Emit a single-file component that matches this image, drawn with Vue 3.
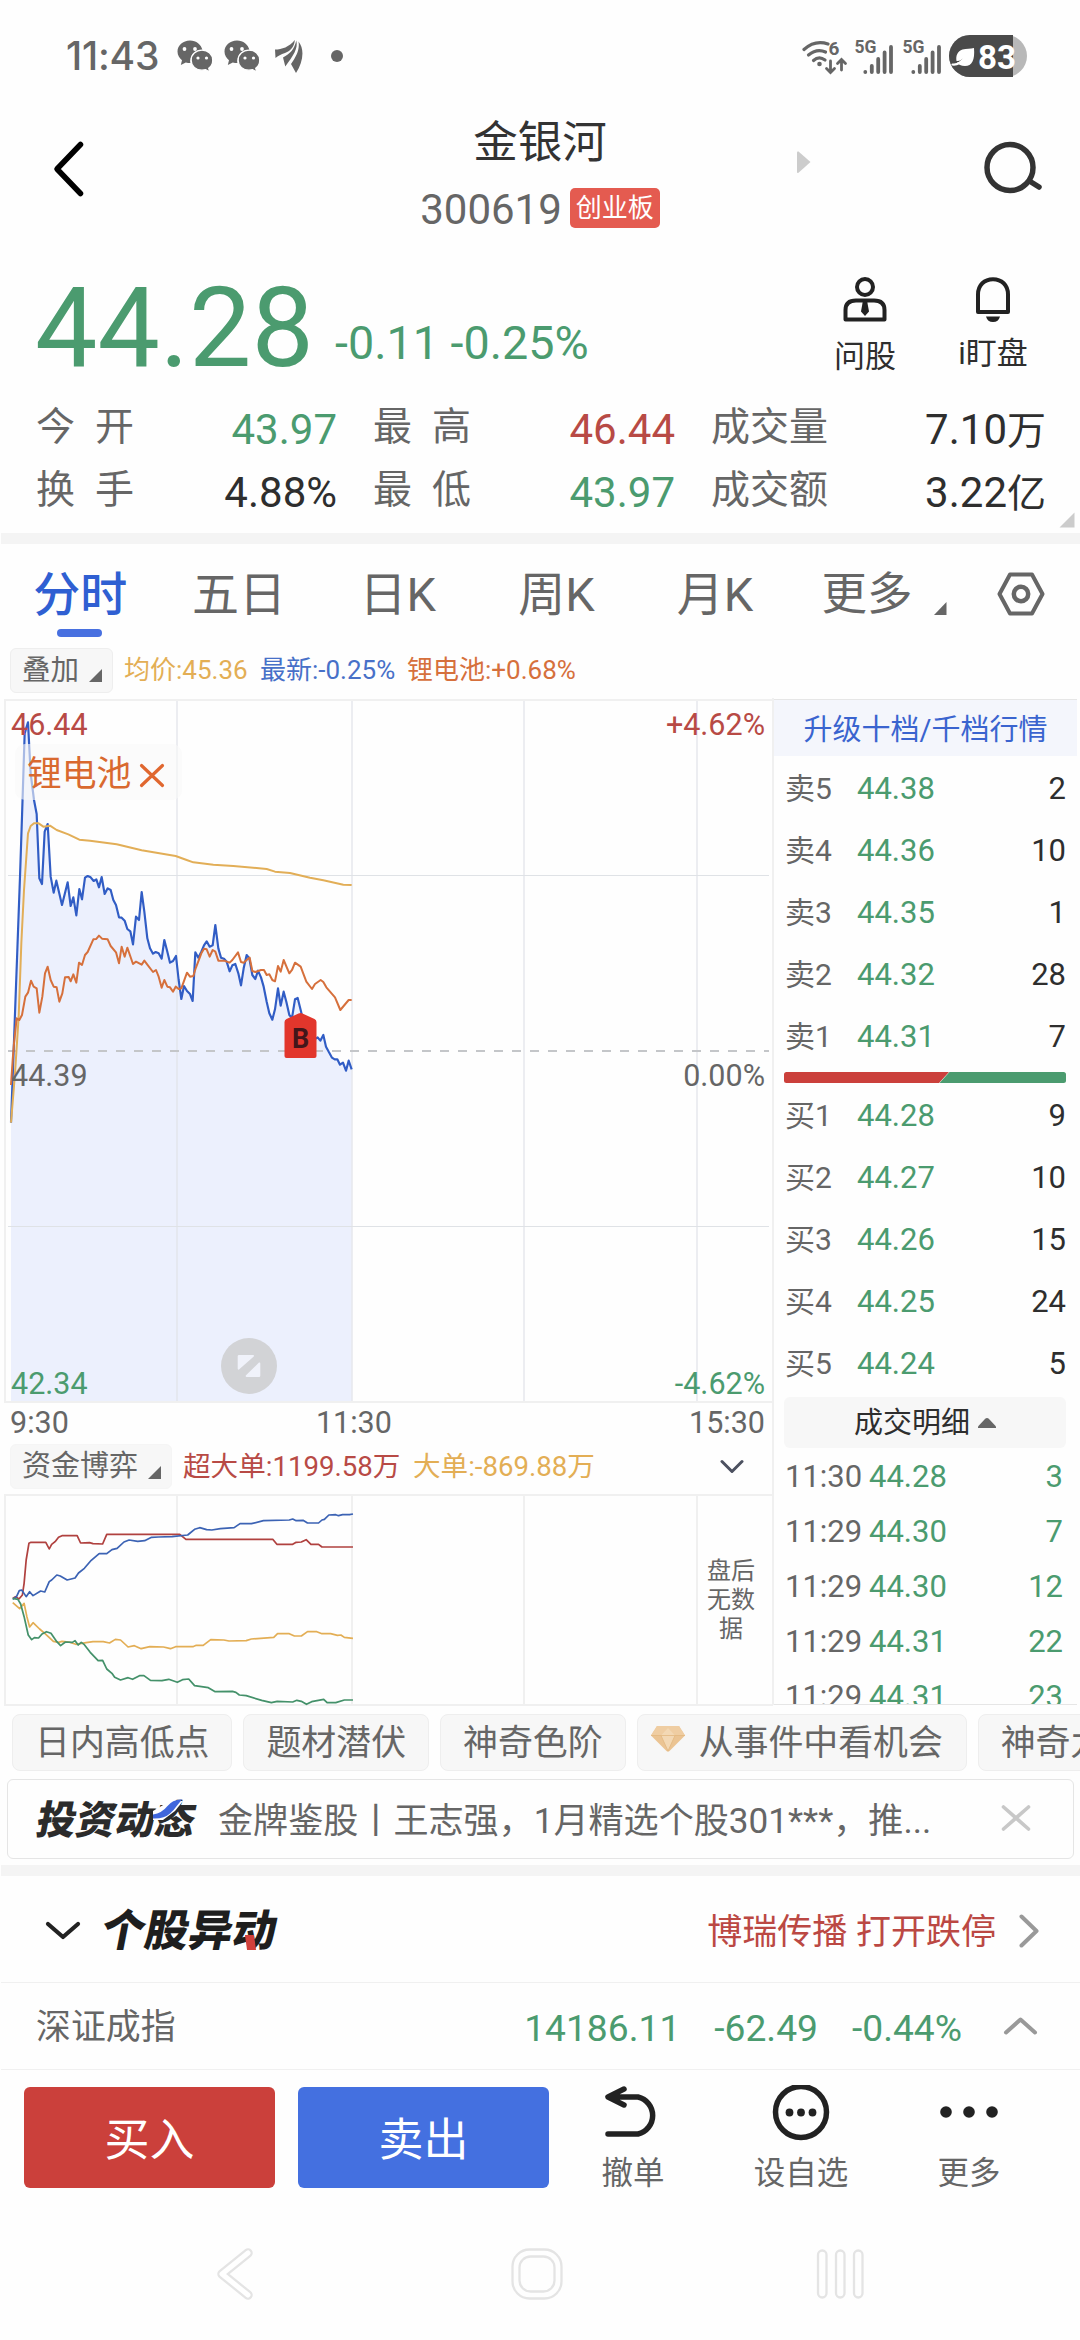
<script setup>
const stats = [
  { label: ['今', '开'], value: '43.97', tone: 'green' },
  { label: ['最', '高'], value: '46.44', tone: 'red' },
  { label: ['成', '交', '量'], value: '7.10', unit: '万', tone: 'dark' },
  { label: ['换', '手'], value: '4.88%', tone: 'dark' },
  { label: ['最', '低'], value: '43.97', tone: 'green' },
  { label: ['成', '交', '额'], value: '3.22', unit: '亿', tone: 'dark' },
]
const tabs = ['分时', '五日', '日K', '周K', '月K']
const asks = [
  ['卖5', '44.38', 2],
  ['卖4', '44.36', 10],
  ['卖3', '44.35', 1],
  ['卖2', '44.32', 28],
  ['卖1', '44.31', 7],
]
const bids = [
  ['买1', '44.28', 9],
  ['买2', '44.27', 10],
  ['买3', '44.26', 15],
  ['买4', '44.25', 24],
  ['买5', '44.24', 5],
]
const ticks = [
  ['11:30', '44.28', 3],
  ['11:29', '44.30', 7],
  ['11:29', '44.30', 12],
  ['11:29', '44.31', 22],
  ['11:29', '44.31', 23],
]
const gridX = [177, 352, 524, 697]

// Series are kept in thirds of a pixel.
const price =
  '33,1298 52,780 60,560 66,380 74,130 84,97 92,250 102,330 110,372 118,565 126,582 134,425 143,402 152,560 161,608 169,572 186,645 203,577 212,648 220,622 229,676 238,597 246,628 255,563 263,558 272,562 281,573 289,568 297,592 305,561 314,612 323,595 332,600 340,630 348,645 357,682 365,683 374,692 382,717 391,724 399,763 408,680 417,690 425,606 433,665 442,745 450,775 459,791 467,786 476,790 485,806 493,750 502,785 510,818 519,813 528,798 536,870 544,927 552,888 561,903 570,912 578,933 586,787 595,803 604,785 612,766 620,754 629,770 638,766 646,705 655,775 663,803 672,806 680,815 689,844 697,826 706,822 715,850 723,886 731,835 740,795 748,805 757,855 766,867 774,842 783,862 791,890 800,935 808,970 817,989 825,958 834,895 842,947 851,905 859,935 868,975 876,984 885,928 893,924 902,960 908,985 925,1030 940,1050 953,1042 961,1052 970,1035 978,1070 987,1087 996,1103 1004,1108 1012,1108 1020,1124 1029,1118 1038,1142 1046,1112 1055,1138'
const sector =
  '33,1185 38,1110 42,1060 50,985 58,990 66,975 76,920 84,908 93,872 101,890 110,895 118,968 127,920 135,850 143,830 152,870 161,890 170,892 178,935 187,910 195,862 206,861 212,874 220,853 229,878 237,818 246,825 255,795 263,786 280,748 289,747 297,737 306,746 323,748 332,768 348,787 357,820 365,770 374,800 382,773 399,822 408,815 425,824 433,812 442,824 459,846 468,840 476,860 485,893 493,870 502,890 510,892 519,905 527,890 536,897 544,895 561,848 570,860 580,858 587,835 604,790 612,776 620,778 629,800 638,780 646,785 655,812 672,812 689,818 697,810 714,787 723,816 731,818 740,810 749,803 757,843 766,846 783,840 792,840 800,855 808,853 817,870 825,874 834,828 842,845 851,810 868,850 876,840 885,818 902,830 919,875 936,897 945,882 962,870 970,876 979,892 1005,922 1021,960 1046,930 1055,930'
const average =
  '33,1298 45,1150 56,980 64,760 72,600 84,430 92,408 102,400 116,400 130,410 150,407 170,420 205,433 238,449 270,452 350,463 425,481 527,498 560,510 580,517 640,524 700,528 800,537 825,545 870,549 930,563 970,571 1030,584 1055,585'

const flows = [
  { color: '#e3ae55', points: '37,368 57,386 70,370 78,410 86,441 96,428 115,447 130,460 155,484 170,487 180,484 200,486 220,493 250,488 270,485 300,485 318,489 335,478 350,480 372,501 390,497 410,506 435,500 475,501 495,506 510,500 560,500 570,496 590,496 612,479 650,480 665,483 715,482 730,477 795,472 806,461 840,461 855,468 875,468 893,455 920,455 935,461 960,461 980,466 990,465 1000,472 1025,475' },
  { color: '#b0413f', points: '37,355 45,350 55,357 65,345 70,310 76,240 84,190 90,187 133,187 143,207 150,193 160,185 170,172 180,167 224,167 234,189 260,188 270,191 298,192 310,163 522,163 540,178 792,178 804,193 850,193 860,187 875,186 889,179 903,193 925,193 935,201 1025,201' },
  { color: '#3c63b4', points: '37,358 48,350 56,332 63,330 76,350 86,335 96,347 118,333 130,336 143,305 150,300 165,285 175,288 195,300 218,294 228,279 245,265 265,241 288,221 310,221 325,209 340,205 360,186 375,180 400,184 420,182 440,172 460,171 500,170 545,165 565,148 580,143 600,149 615,150 640,146 680,143 697,131 730,131 765,122 840,120 850,117 860,122 880,121 893,129 925,129 935,120 942,118 955,105 975,104 983,107 995,104 1015,104 1025,102' },
  { color: '#44916a', points: '37,355 52,358 60,372 70,410 82,465 92,479 100,473 112,474 122,462 135,455 148,460 165,485 176,497 190,486 210,487 218,482 227,495 236,487 245,494 262,517 285,542 298,541 310,567 325,580 333,592 350,600 372,593 385,598 405,587 418,587 437,601 470,602 490,598 515,607 530,599 548,597 565,617 605,623 625,635 675,634 685,637 695,645 715,647 760,661 788,668 805,664 850,666 862,661 875,664 890,673 905,665 940,658 950,668 975,668 1000,660 1025,660' },
]
</script>

<template>
  <div class="screen">
    <div class="status">
      <span class="clock">11:43</span>
      <svg v-for="n in 2" :key="n" class="wechat" width="36" height="32" viewBox="0 0 36 32">
        <path fill="#666" d="M13 0.5C5.800.5.5 5.500.5 11.500c0 3.700 2 6.700 4.500 8.700L3.800 25l5-2.500c1.500.4 3 .6 4.600.6A11 11 0 0 1 25.500 10.200C24.300 4.600 19.200.5 13 .5z" />
        <path fill="#666" stroke="#fff" stroke-width="1.200" d="M25 10.200c-6.100 0-10.800 4.200-10.800 10s4.700 10 10.800 10c1.300 0 2.500-.2 3.700-.5l4 2.300-1-3.700c2.400-1.800 4-4.800 4-8.100 0-5.800-4.600-10-10.700-10z" />
        <g fill="#fff"><circle cx="7.500" cy="9" r="1.900" /><circle cx="18" cy="9" r="1.900" /><circle cx="21" cy="18" r="1.600" /><circle cx="29.500" cy="18" r="1.600" /></g>
      </svg>
      <svg class="wing" width="28" height="33" viewBox="0 0 28 33" fill="#666">
        <path d="M0 9.500C7 9.500 14 7 19.800 0 19.500 6 16 11 10 13 6 14.500 3 15.500 0.500 18z" />
        <path d="M21.300.5c2 8-3 15-11 26L8 17.500C15 14 19.500 9 21.300.5z" />
        <path d="M23.500 1.500c6.500 8 4.500 21-2.500 31.500l-5-9C21 17 25 10 23.500 1.500z" />
      </svg>
      <i class="dot"></i>
      <svg class="signals" width="226" height="44" viewBox="802 34 226 44">
        <g fill="none" stroke="#666" stroke-width="3.200" stroke-linecap="round">
          <path d="M804 49.500Q815 39.500 828 44" />
          <path d="M808.500 55Q817 48 825.500 52" />
          <path d="M813.500 60.500Q819 55.500 825 60" />
          <path d="M830.500 61v11M826.500 68.500l4 4 4-4M841.500 70V60M837.500 63.500l4-4 4 4" stroke-width="2.800" />
        </g>
        <circle cx="819.500" cy="64" r="2.300" fill="#666" />
        <text x="828.500" y="54.500" class="sig" font-size="19">6</text>
        <g v-for="dx in [0, 48]" :key="dx" :transform="`translate(${dx} 0)`">
          <text x="854.500" y="53" class="sig" font-size="17.500" textLength="22" lengthAdjust="spacingAndGlyphs">5G</text>
          <g stroke="#666" stroke-width="3.800" stroke-linecap="round">
            <path d="M865.300 72v.1M871.800 66v6M878.200 59v13M884.600 52.500v19.500M891 47v25" />
          </g>
        </g>
        <rect x="949" y="35" width="78" height="42" rx="21" fill="#b8b8b8" />
        <path d="M970 35h43v42h-43a21 21 0 0 1 0-42z" fill="#4a4a4a" />
        <path d="M974 48c1 12-2 18-9 18-4 0-6.500-1.500-8-3.500 3 0 7-3 9.500-6.500-3.500 3-7 5.500-10 5-1-5 1-10 6-11.500 4-1.200 8-.5 11.500-1.500z" fill="#fff" />
        <path d="M952.500 64.500c5 1 9.500-3 13.500-8" stroke="#fff" stroke-width="2.200" fill="none" stroke-linecap="round" />
        <text x="978" y="69.200" class="batt" textLength="38" lengthAdjust="spacingAndGlyphs">83</text>
      </svg>
    </div>

    <header class="header">
      <svg class="back" width="34" height="58" viewBox="0 0 34 58"><path d="M28.500 4.500 5 29l23.500 24.500" fill="none" stroke="#000" stroke-width="5.500" stroke-linecap="round" stroke-linejoin="round" /></svg>
      <div class="heading">
        <h1>金银河</h1>
        <div class="code"><span>300619</span><b>创业板</b></div>
      </div>
      <div class="header-right">
        <svg width="16" height="24" viewBox="0 0 16 24"><path d="M1 2.500Q1 1 2.500 1.500L14.500 12 2.500 22.800Q1 23.500 1 22z" fill="#ccc" /></svg>
        <svg class="search" width="62" height="60" viewBox="0 0 62 60" fill="none" stroke="#333" stroke-width="5.500" stroke-linecap="round"><circle cx="29" cy="29.500" r="23" /><path d="M50 44l8 5" /></svg>
      </div>
    </header>

    <section class="quote">
      <div class="price-row">
        <span class="price">44.28</span>
        <span class="change">-0.11 -0.25%</span>
        <div class="quick ask">
          <svg width="44" height="46" viewBox="0 0 44 46" fill="none" stroke="#222" stroke-width="4">
            <circle cx="22" cy="11" r="8" />
            <path d="M2.500 43.500V34Q2.500 24.500 13 24.500h18q10.500 0 10.500 9.500v9.500z" stroke-linejoin="round" />
            <path d="M19.700 26h4.600l1.700 9.500-4 4.500-4-4.500z" fill="#222" stroke="none" />
          </svg>
          <span>问股</span>
        </div>
        <div class="quick watch">
          <svg width="36" height="46" viewBox="0 0 36 46">
            <path d="M3 36V18.500C3 9 9.500 3.200 18 3.200S33 9 33 18.500V36z" fill="none" stroke="#222" stroke-width="4" stroke-linejoin="round" />
            <path d="M11 40.500h14q-1.500 5.500-7 5.500t-7-5.500z" fill="#222" />
          </svg>
          <span>i盯盘</span>
        </div>
      </div>
      <div class="stats">
        <div v-for="(s, i) in stats" :key="i" class="stat">
          <span class="stat-label"><i v-for="c in s.label" :key="c">{{ c }}</i></span>
          <span :class="s.tone">{{ s.value }}<small v-if="s.unit">{{ s.unit }}</small></span>
        </div>
      </div>
      <svg class="corner" width="16" height="16" viewBox="0 0 16 16"><path d="M15.500 0.500v15h-15z" fill="#ccc" /></svg>
    </section>

    <div class="band"></div>

    <nav class="tabs">
      <span v-for="(t, i) in tabs" :key="t" class="tab" :class="{ active: i === 0 }">{{ t }}</span>
      <span class="more">更多</span>
      <svg class="tri" width="13" height="13" viewBox="0 0 13 13"><path d="M12.500 0v13H0z" fill="#666" /></svg>
      <svg class="hex" width="48" height="44" viewBox="0 0 48 44" fill="none" stroke="#666" stroke-width="4"><path d="M13 2.500h22L45.500 22 35 41.500H13L2.500 22z" stroke-linejoin="round" /><circle cx="24" cy="22" r="7.200" stroke-width="4.500" /></svg>
    </nav>

    <div class="legend">
      <span class="pill"><span>叠加</span><svg width="13" height="13" viewBox="0 0 12 12"><path d="M12 0v12H0z" fill="#666" /></svg></span>
      <span class="avg">均价:45.36</span>
      <span class="last">最新:-0.25%</span>
      <span class="sector">锂电池:+0.68%</span>
    </div>

    <main class="market">
      <div class="charts">
        <svg class="chart" width="775" height="706" viewBox="0 698 775 706">
          <g transform="translate(0 690) scale(.33333)">
            <polygon :points="`33,2136 ${price} 1055,2136`" fill="#ecf0fd" />
          </g>
          <g stroke="#e2e4ea" stroke-opacity=".65" stroke-width="2">
            <path v-for="x in gridX" :key="x" :d="`M${x} 700V1402`" />
          </g>
          <path d="M8 875.500H769M8 1226.500H769" stroke="#dfe2e6" stroke-width="1" />
          <path d="M773 700H5V1402H773" fill="none" stroke="#f0f0f0" stroke-width="2" />
          <path d="M8 1051H769" stroke="#c4c6c9" stroke-width="1.800" stroke-dasharray="9 9" />
          <g class="axis">
            <text x="765" y="1086" fill="#666" text-anchor="end">0.00%</text>
            <text x="765" y="735" fill="#b84a45" text-anchor="end">+4.62%</text>
            <text x="11" y="1394" fill="#4b9b6f">42.34</text>
            <text x="765" y="1394" fill="#4b9b6f" text-anchor="end">-4.62%</text>
          </g>
          <g transform="translate(0 690) scale(.33333)" fill="none" stroke-width="6" stroke-linejoin="round">
            <polyline :points="price" stroke="#315dc5" stroke-width="6.500" />
            <polyline :points="average" stroke="#e2ae57" />
            <polyline :points="sector" stroke="#d6703c" />
          </g>
          <text x="11" y="1086" class="axis" fill="#666">44.39</text>
          <text x="11" y="735" class="axis" fill="#b84a45">46.44</text>
          <rect x="15" y="744" width="167" height="56" rx="10" fill="#f8f8f8" fill-opacity=".6" />
          <text x="27" y="785.500" class="tag-text">锂电池</text>
          <path d="M141.500 765.500l21 20M162.500 765.500l-21 20" stroke="#e0672f" stroke-width="3.200" stroke-linecap="round" />
          <path d="M284.500 1022q0-2 2-3l12-5.500q2-.8 4 0l12 5.500q2 1 2 3v34q0 2-2 2h-28q-2 0-2-2z" fill="#e2362c" />
          <text x="300.500" y="1048" class="mark">B</text>
          <circle cx="249" cy="1366" r="28" fill="#d2d3d6" />
          <path d="M239 1355h14.500q1 .8 0 1.800L239 1369.500q-1.300.5-1.300-1v-12.200q0-1.300 1.300-1.300zM259 1377h-12.500q-1.500-.8-.5-1.800L259 1362.500q1.300-.5 1.300 1v12.200q0 1.300-1.300 1.300z" fill="#f0f2fa" />
        </svg>
        <div class="times"><span>9:30</span><span>11:30</span><span>15:30</span></div>
        <div class="flow-head">
          <span class="pill wide"><span>资金博弈</span><svg width="13" height="13" viewBox="0 0 12 12"><path d="M12 0v12H0z" fill="#666" /></svg></span>
          <span class="red">超大单:1199.58万</span>
          <span class="gold">大单:-869.88万</span>
          <svg class="fold" width="24" height="15" viewBox="0 0 24 15"><path d="M2 2.500l10 10 10-10" fill="none" stroke="#4c5160" stroke-width="3" stroke-linecap="round" stroke-linejoin="round" /></svg>
        </div>
        <div class="flow-chart">
          <svg class="chart" width="775" height="214" viewBox="0 1493 775 214">
            <g stroke="#f0f0f0" stroke-width="2">
              <path v-for="x in gridX" :key="x" :d="`M${x} 1495V1705`" />
              <path d="M773 1495H5V1705H773" fill="none" />
            </g>
            <g transform="translate(0 1480) scale(.34436 .33333)" fill="none" stroke-width="5" stroke-linejoin="round">
              <polyline v-for="f in flows" :key="f.color" :points="f.points" :stroke="f.color" />
            </g>
          </svg>
          <p class="nodata">盘后无数据</p>
        </div>
      </div>

      <aside class="book">
        <div class="upgrade">升级十档/千档行情</div>
        <div v-for="r in asks" :key="r[0]" class="level"><span>{{ r[0] }}</span><b>{{ r[1] }}</b><em>{{ r[2] }}</em></div>
        <svg class="ratio" width="282" height="11" viewBox="0 0 282 11"><path d="M2.500 0H165l-10 11H2.500Q0 11 0 8.500v-6Q0 0 2.500 0z" fill="#cb403b" /><path d="M165.500 0h114q2.500 0 2.500 2.500v6q0 2.500-2.500 2.500h-124z" fill="#4b9b6f" /></svg>
        <div v-for="r in bids" :key="r[0]" class="level"><span>{{ r[0] }}</span><b>{{ r[1] }}</b><em>{{ r[2] }}</em></div>
        <div class="detail"><span>成交明细</span><svg width="18" height="10" viewBox="0 0 18 10"><path d="M9 0q1 0 1.800.8L18 8.500V10H0V8.500L7.200.8Q8 0 9 0z" fill="#666" /></svg></div>
        <div v-for="(r, i) in ticks" :key="i" class="tick"><span>{{ r[0] }}</span><b>{{ r[1] }}</b><em>{{ r[2] }}</em></div>
      </aside>
    </main>

    <div class="chips">
      <span>日内高低点</span>
      <span>题材潜伏</span>
      <span>神奇色阶</span>
      <span class="gem">
        <svg width="34" height="26" viewBox="0 0 34 26"><path d="M6 0h22l6 9.500L18.500 25q-1.500 1.300-3 0L0 9.500z" fill="#ebc493" /><path d="M6 0h22l6 9.500H0z" fill="#efcda2" /><path d="M10 9.500 17 2l7 7.500L17 25z" fill="#f3d8b4" /><path d="M0 9.500h34M10 9.500 17 25l7-15.500" fill="none" stroke="#e2b780" stroke-width=".8" /></svg>
        从事件中看机会
      </span>
      <span>神奇九转</span>
    </div>

    <div class="banner">
      <span class="logo"><span class="logo-text">投资动态</span>
        <svg width="32" height="22" viewBox="0 0 32 22"><path d="M0 21V12L17 2h13L22 12 10 21z" fill="#fefefe" /><path d="M0 15.500Q9 14 14 7.500 20 0 29 .5L24.500 6q-3.500 5-7.500 8.500Q11 20 0 19.500z" fill="#3f66dc" /></svg>
      </span>
      <span class="news">金牌鉴股丨王志强，1月精选个股301***，推...</span>
      <svg class="close" width="30" height="28" viewBox="0 0 30 28"><path d="M2.500 3l25 22M27.500 3l-25 22" stroke="#c8c8c8" stroke-width="3.600" stroke-linecap="round" /></svg>
    </div>

    <div class="band"></div>

    <div class="moves">
      <svg width="36" height="20" viewBox="0 0 36 20"><path d="M3 3l15 13L33 3" fill="none" stroke="#222" stroke-width="4.200" stroke-linecap="round" stroke-linejoin="round" /></svg>
      <span class="logo big"><span class="logo-text">个股异动</span><i></i></span>
      <span class="alert">博瑞传播 打开跌停</span>
      <svg width="20" height="34" viewBox="0 0 20 34"><path d="M2.500 2.500 17.500 17l-15 14.500" fill="none" stroke="#999" stroke-width="4" stroke-linecap="round" stroke-linejoin="round" /></svg>
    </div>

    <div class="index">
      <span class="index-name">深证成指</span>
      <span class="i1">14186.11</span><span class="i2">-62.49</span><span class="i3">-0.44%</span>
      <svg width="35" height="20" viewBox="0 0 35 20"><path d="M3 16.500l14.500-13L32 16.500" fill="none" stroke="#999" stroke-width="4" stroke-linecap="round" stroke-linejoin="round" /></svg>
    </div>

    <footer class="actions">
      <button class="buy">买入</button>
      <button class="sell">卖出</button>
      <div class="act undo">
        <svg width="58" height="56" viewBox="0 0 58 56" fill="none" stroke="#222" stroke-width="5.500" stroke-linecap="round" stroke-linejoin="round"><path d="M20 4 4 12l16 8M5 12h29a19 19 0 0 1 0 37H4" /></svg>
        <span>撤单</span>
      </div>
      <div class="act fav">
        <svg width="58" height="56" viewBox="0 0 58 56"><circle cx="29" cy="27" r="25.500" fill="none" stroke="#222" stroke-width="5.500" /><g fill="#222"><circle cx="17.500" cy="27.500" r="3.900" /><circle cx="29" cy="27.500" r="3.900" /><circle cx="40.500" cy="27.500" r="3.900" /></g></svg>
        <span>设自选</span>
      </div>
      <div class="act etc">
        <svg width="58" height="56" viewBox="0 0 58 56" fill="#222"><circle cx="6" cy="27" r="5.800" /><circle cx="29" cy="27" r="5.800" /><circle cx="52" cy="27" r="5.800" /></svg>
        <span>更多</span>
      </div>
    </footer>

    <div class="sysnav">
      <svg width="36" height="54" viewBox="0 0 36 54"><path d="M31 6 5 27l26 21" fill="none" stroke="#e4e4e4" stroke-width="9.500" stroke-linecap="round" stroke-linejoin="round" /><path d="M31 6 5 27l26 21" fill="none" stroke="#fff" stroke-width="5" stroke-linecap="round" stroke-linejoin="round" /></svg>
      <svg width="52" height="54" viewBox="0 0 52 54" fill="none" stroke="#e4e4e4" stroke-width="2.300"><rect x="1.500" y="2.500" width="49" height="49" rx="17" /><rect x="8.500" y="9.500" width="35" height="35" rx="11" /></svg>
      <svg width="48" height="54" viewBox="0 0 48 54" fill="none" stroke="#e4e4e4" stroke-width="2.300"><rect x="2" y="3.500" width="8.500" height="47" rx="4.200" /><rect x="20" y="3.500" width="8.500" height="47" rx="4.200" /><rect x="38" y="3.500" width="8.500" height="47" rx="4.200" /></svg>
    </div>
  </div>
</template>

<style>
html, body { margin: 0; background: #fefefe; }
</style>

<style scoped>
* { box-sizing: border-box; }
.screen {
  width: 1080px;
  height: 2340px;
  overflow: hidden;
  background: #fefefe;
  color: #666;
  font-family: Roboto, "Noto Sans CJK SC", sans-serif;
  white-space: nowrap;
}
svg { display: block; flex: none; }
i, em { font-style: normal; }
b { font-weight: 400; }
.green { color: #4b9b6f; }
.red { color: #b84a45; }
.dark { color: #2e2e2e; }

.status { height: 112px; display: flex; align-items: center; padding-left: 66px; }
.clock { width: 111px; font: 500 39px/44px Inter, Roboto, sans-serif; letter-spacing: -0.2px; }
.wechat { margin-right: 11px; }
.wing { margin-left: 4px; }
.dot { width: 12px; height: 12px; border-radius: 50%; background: #666; margin-left: 28px; }
.signals { margin-left: auto; margin-right: 52px; }
.sig { font-family: Roboto, sans-serif; font-weight: 700; fill: #666; }
.batt { font: 700 34px Roboto, sans-serif; fill: #fff; }

.header { height: 134px; display: grid; grid-template-columns: 300px 480px 300px; }
.back { margin: 28px 0 0 52px; }
.heading { display: flex; flex-direction: column; align-items: center; }
h1 { margin: 0; font-size: 44.500px; font-weight: 400; line-height: 62px; color: #333; }
.code { display: flex; align-items: center; height: 72px; font-size: 42px; line-height: 72px; }
.code b { width: 90px; height: 40px; margin: -5px 0 0 8px; border-radius: 5px; background: #e45b50; color: #fff; font-size: 26px; line-height: 40px; text-align: center; }
.header-right { display: flex; align-items: flex-start; }
.header-right svg { margin: 38px 0 0 16px; }
.header-right .search { margin: 26px 37px 0 auto; }

.quote { position: relative; height: 287px; }
.price-row { display: flex; height: 152px; padding: 12px 0 0 35px; }
.price { width: 300px; font-size: 111px; line-height: 140px; color: #4b9b6f; }
.change { width: 480px; font-size: 46.700px; line-height: 168px; margin-top: 1px; color: #4b9b6f; }
.quick { display: flex; flex-direction: column; align-items: center; width: 100px; padding-top: 18px; color: #2e2e2e; font-size: 31px; line-height: 40px; }
.quick span { margin-top: 15px; }
.watch { margin-left: 28px; }
.watch span { margin-top: 12px; }
.stats { display: grid; grid-template-columns: 301px 302px 335px; column-gap: 36px; padding-left: 36px; }
.stat { display: flex; justify-content: space-between; height: 63px; font-size: 42px; line-height: 63px; }
.stat-label { display: flex; justify-content: space-between; min-width: 98px; font-size: 39px; line-height: 59px; }
.stat small { font-size: 39px; }
.corner { position: absolute; right: 5px; bottom: 5px; }

.band { height: 11px; background: #f4f4f4; margin-left: 1px; }

.tabs { height: 102px; display: flex; align-items: center; padding-left: 1px; font-size: 47px; line-height: 102px; }
.tab { position: relative; width: 158.700px; text-align: center; }
.tab.active { color: #2f5fd2; font-weight: 500; }
.tab.active::after { content: ""; position: absolute; left: 56px; bottom: 9px; width: 45px; height: 8px; border-radius: 4px; background: #4870e0; }
.more { width: 94px; margin-left: 27px; font-size: 45.500px; }
.tri { margin: 26px 0 0 19px; }
.hex { margin: -3px 0 0 50px; }

.legend { height: 52px; display: flex; align-items: center; padding: 0 0 4px 10px; font-size: 26px; line-height: 49px; }
.pill { display: flex; align-items: center; width: 103px; height: 45px; padding-left: 11px; background: #f7f7f7; border: 1px solid #eee; border-radius: 6px; font-size: 28.500px; line-height: 45px; }
.pill svg { margin: 10px 0 0 10px; }
.avg { margin-left: 11px; width: 136px; color: #e3ae55; }
.last { width: 147px; color: #4770c8; }
.sector { color: #d6703c; }

.market { height: 1009px; display: flex; }
.charts { width: 774px; height: 1007px; border-right: 2px solid #f0f0f0; }
.axis { font: 30.500px Roboto, sans-serif; }
.tag-text { font: 34.800px "Noto Sans CJK SC", sans-serif; fill: #d9692f; }
.mark { font: 700 27px Roboto, sans-serif; fill: #43161a; text-anchor: middle; }
.times { height: 36px; display: flex; justify-content: space-between; padding: 0 7px 0 10px; font-size: 30.500px; line-height: 38px; }
.times span:nth-child(2) { margin-right: 50px; }
.flow-head { height: 53px; display: flex; align-items: center; padding-left: 10px; font-size: 27.600px; line-height: 58px; }
.pill.wide { width: 162px; border-color: #f5f5f5; font-size: 29px; line-height: 47px; }
.pill.wide svg { margin-left: 10px; margin-top: 12px; }
.flow-head > .red { margin-left: 11px; width: 230px; }
.gold { color: #e3ae55; }
.fold { margin-left: auto; margin-right: 28px; }
.flow-chart { position: relative; }
.nodata { position: absolute; left: 703px; top: 64px; width: 56px; margin: 0; font-size: 24px; line-height: 29px; text-align: center; white-space: normal; }

.book { width: 303px; height: 1006px; margin-top: 1px; overflow: hidden; border: solid #e6e6e6; border-width: 1px 0; }
.upgrade { height: 56px; margin-bottom: 1px; background: #f4f6fc; color: #3a64cf; font-size: 29px; line-height: 60px; text-align: center; }
.level { height: 62px; display: flex; padding: 0 11px; font-size: 31px; line-height: 63px; }
.level span { width: 72px; font-size: 30px; }
.level b, .tick b { color: #4b9b6f; }
.level em { margin-left: auto; color: #2e2e2e; }
.ratio { margin: 5px 0 1px 10px; }
.detail { display: flex; align-items: center; justify-content: center; gap: 8px; width: 282px; height: 51px; margin: 3px 0 1px 10px; border-radius: 6px; background: #f7f7f7; color: #2e2e2e; font-size: 29px; line-height: 54px; }
.tick { height: 55px; display: flex; padding: 0 14px 0 11px; font-size: 31px; line-height: 56px; }
.tick span { width: 84px; }
.tick em { margin-left: auto; color: #4b9b6f; }

.chips { height: 64px; display: flex; gap: 11px; padding: 7px 0 0 12px; overflow: hidden; font-size: 34.900px; line-height: 57px; }
.chips span { flex: none; height: 57px; padding: 0 22px; border: 1px solid #eee; border-radius: 8px; background: #f7f7f7; line-height: 57px; }
.chips .gem { display: flex; gap: 14px; padding-left: 13px; width: 330px; }
.gem svg { margin-top: 11px; }

.banner { width: 1067px; height: 80px; margin: 8px 0 6px 7px; border: 1px solid #e5e5e5; border-radius: 6px; display: flex; align-items: center; padding-left: 29px; }
.logo { position: relative; width: 181px; }
.logo-text { display: inline-block; font-size: 39.500px; font-weight: 900; line-height: 60px; color: #2b2b2b; transform: skewX(-11deg); }
.banner .logo { margin-top: 3px; }
.logo svg { position: absolute; left: 116px; top: 8px; }
.news { margin-top: 3px; font-size: 35.100px; line-height: 60px; }
.close { margin: -2px 42px 0 auto; }

.moves { height: 107px; display: flex; align-items: center; padding-left: 44px; border-bottom: 1px solid #f0f0f0; margin-left: 1px; }
.moves > svg { margin-top: 3px; }
.logo.big { width: 200px; margin: 4px 0 0 21px; }
.big .logo-text { font-size: 43.700px; color: #1e1e1e; }
.big i { position: absolute; left: 144px; top: 34px; width: 9px; height: 15px; background: #d0403c; transform: skewX(8deg); }
.alert { margin: 7px 23px 0 auto; color: #bb4843; font-size: 35px; line-height: 60px; }
.moves > svg:last-child { margin-right: 41px; }

.index { height: 87px; display: flex; align-items: center; padding: 3px 42px 0 35px; border-bottom: 1px solid #f0f0f0; margin-left: 1px; font-size: 37.200px; line-height: 60px; color: #4b9b6f; }
.index-name { font-size: 34.900px; color: #666; }
.i1 { margin-left: auto; }
.i2 { margin-left: 34px; }
.i3 { margin-left: 34px; }
.index svg { margin: -4px 0 0 41px; }

.actions { display: flex; height: 137px; padding: 17px 0 0 24px; }
button { width: 251px; height: 101px; border: 0; border-radius: 6px; color: #fff; font: 45px/108px Roboto, "Noto Sans CJK SC", sans-serif; padding: 0; }
.buy { background: #cb403b; }
.sell { margin-left: 23px; background: #4470e0; }
.act { width: 120px; display: flex; flex-direction: column; align-items: center; margin-top: -2px; font-size: 31.500px; line-height: 44px; }
.act svg { margin-bottom: 11px; }
.undo { margin-left: 24px; }
.fav { margin-left: 48px; }
.etc { margin-left: 48px; }

.sysnav { display: flex; height: 54px; margin-top: 40px; padding-left: 217px; }
.sysnav svg:nth-child(2) { margin-left: 258px; }
.sysnav svg:nth-child(3) { margin-left: 253px; }
</style>
